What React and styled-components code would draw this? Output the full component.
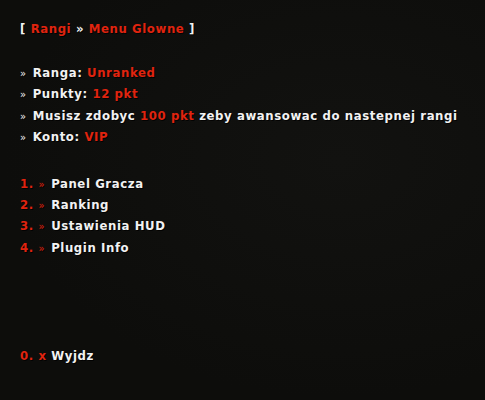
import React from "react";
import styled, { createGlobalStyle } from "styled-components";

const Global = createGlobalStyle`
  html, body { margin: 0; padding: 0; background: #0e0e0c; }
`;

const Screen = styled.div`
  width: 485px;
  height: 400px;
  box-sizing: border-box;
  padding: 18px 0 0 20px;
  background: radial-gradient(ellipse at 70% 40%, #121210 0%, #0d0d0b 70%);
  font-family: "DejaVu Sans Condensed", "DejaVu Sans", sans-serif;
  font-weight: bold;
  font-size: 13px;
  letter-spacing: 0.6px;
  color: #f2f2f2;
  text-shadow: 1px 1px 0 rgba(0, 0, 0, 0.8);
  display: flex;
  flex-direction: column;
`;

const Line = styled.div`
  height: 21.3px;
  line-height: 21.3px;
  white-space: nowrap;
`;

const Blank = styled.div`
  height: ${(p) => p.$h}px;
`;

const Red = styled.span`
  color: #e0240f;
`;

const Arrow = styled.span`
  font-size: 11px;
  font-weight: normal;
  color: ${(p) => (p.$red ? "#e0240f" : "#f2f2f2")};
  margin-right: 6px;
`;

const info = [
  ["Ranga: ", "Unranked", ""],
  ["Punkty: ", "12 pkt", ""],
  ["Musisz zdobyc ", "100 pkt", " zeby awansowac do nastepnej rangi"],
  ["Konto: ", "VIP", ""],
];

const menu = ["Panel Gracza", "Ranking", "Ustawienia HUD", "Plugin Info"];

export default function App() {
  return (
    <>
      <Global />
      <Screen>
        <Line>
          [ <Red>Rangi</Red> » <Red>Menu Glowne</Red> ]
        </Line>
        <Blank $h={22.7} />
        {info.map(([a, b, c]) => (
          <Line key={a}>
            <Arrow>»</Arrow>
            {a}
            <Red>{b}</Red>
            {c}
          </Line>
        ))}
        <Blank $h={25.7} />
        {menu.map((m, i) => (
          <Line key={m}>
            <Red>{i + 1}. </Red>
            <Arrow $red>»</Arrow>
            {m}
          </Line>
        ))}
        <Blank $h={86.7} />
        <Line>
          <Red>0. x </Red>
          Wyjdz
        </Line>
      </Screen>
    </>
  );
}
